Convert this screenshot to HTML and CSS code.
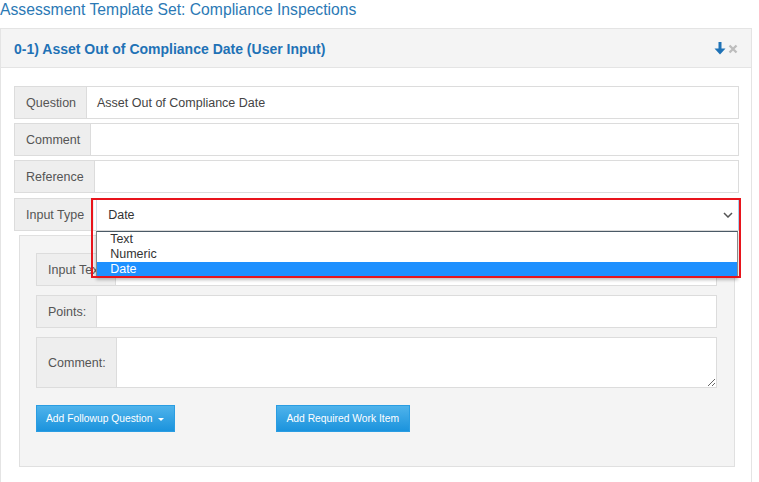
FILE: index.html
```html
<!DOCTYPE html>
<html>
<head>
<meta charset="utf-8">
<link rel="stylesheet" href="styles.css">
</head>
<body>
<div class="title">Assessment Template Set: Compliance Inspections</div>
<div class="panel">
  <div class="panel-head">
    <span class="head-text">0-1) Asset Out of Compliance Date (User Input)</span>
    <span class="head-icons">
      <svg width="12" height="13" viewBox="0 0 12 13"><path d="M4.5 0h3v6.5h4L6 12.5 0.5 6.5h4z" fill="#1f72b6"/></svg>
      <svg width="10" height="10" viewBox="0 0 10 10"><path d="M1.5 1.5l7 7M8.5 1.5l-7 7" stroke="#bdbdbd" stroke-width="2.4"/></svg>
    </span>
  </div>
  <div class="panel-body">
    <div class="row"><div class="label">Question</div><div class="field">Asset Out of Compliance Date</div></div>
    <div class="row"><div class="label">Comment</div><div class="field"></div></div>
    <div class="row"><div class="label">Reference</div><div class="field"></div></div>
    <div class="row type-row">
      <div class="label">Input Type</div>
      <div class="select">
        <span>Date</span>
        <svg class="chev" width="10" height="6" viewBox="0 0 10 6"><path d="M1 1l4 4 4-4" fill="none" stroke="#555" stroke-width="1.5"/></svg>
        <div class="dropdown">
          <div class="opt">Text</div>
          <div class="opt">Numeric</div>
          <div class="opt sel">Date</div>
        </div>
      </div>
      <div class="redbox"></div>
    </div>
    <div class="well">
      <div class="row"><div class="label">Input Text:</div><div class="field"></div></div>
      <div class="row"><div class="label">Points:</div><div class="field"></div></div>
      <div class="row tall"><div class="label">Comment:</div><textarea class="field ta"></textarea></div>
      <div class="buttons">
        <div class="btn">Add Followup Question <span class="caret"></span></div>
        <div class="btn second">Add Required Work Item</div>
      </div>
    </div>
  </div>
</div>
</body>
</html>
```
FILE: styles.css
```css
html, body { margin: 0; padding: 0; background: #fff; }
body { font-family: "Liberation Sans", Arial, sans-serif; color: #555; }
.title { font-size: 15.7px; line-height: 20px; color: #2b79b5; height: 28px; padding-left: 0; }
.panel { width: 752px; box-sizing: border-box; border: 1px solid #e4e4e4; border-bottom: none; height: 454px; }
.panel-head { height: 38px; background: #f4f4f4; border-bottom: 1px solid #e4e4e4; display: flex; align-items: center; justify-content: space-between; padding: 0 13px 0 13px; }
.head-text { font-size: 14px; font-weight: bold; color: #1f72b6; margin-top: 1px; }
.head-icons { display: flex; align-items: center; gap: 2px; margin-top: 1px; }
.panel-body { padding: 18px 12px 0 13px; }
.row { display: flex; height: 33px; box-sizing: border-box; border: 1px solid #dcdcdc; margin-bottom: 4px; font-size: 12.5px; }
.label { background: #eeeeee; border-right: 1px solid #dcdcdc; display: flex; align-items: center; padding: 0 10px 0 11px; color: #555; white-space: nowrap; }
.field { flex: 1; background: #fff; display: flex; align-items: center; padding-left: 10px; color: #444; }
.type-row { position: relative; border-right: none; margin-top: 5px; }
.type-row .label { border-right: none; }
.select { flex: 1; position: relative; background: #fff; border-left: 1px solid #cfdde8; border-right: 1px solid #a9d1ec; display: flex; align-items: center; padding-left: 11px; color: #333; margin-left: 2px; }
.chev { position: absolute; right: 5px; top: 13px; }
.dropdown { position: absolute; left: -1px; right: 0; top: 32px; background: #fff; border: 1px solid #8a8a8a; border-top: 1px solid #4a5a66; box-shadow: 0 2px 3px rgba(0,0,0,0.25); z-index: 3; }
.opt { height: 15px; line-height: 15px; padding-left: 13px; font-size: 12.5px; color: #333; }
.opt.sel { background: #1e90ff; color: #fff; }
.redbox { position: absolute; left: 76px; top: -1px; width: 646px; height: 76px; border: 2px solid #e8141c; z-index: 4; pointer-events: none; }
.well { margin: 1px 4px 0 5px; background: #f4f4f4; border: 1px solid #e0e0e0; padding: 17px 17px 34px 16px; }
.well .row { margin-bottom: 9px; }
.well .row.tall { height: 51px; margin-bottom: 17px; }
.ta { resize: vertical; border: none; margin: 0; font: inherit; outline: none; }
.buttons { display: flex; }
.btn { height: 27px; box-sizing: border-box; padding: 0 10px 0 9px; display: flex; align-items: center; font-size: 10.3px; color: #fff; background: linear-gradient(#4fb3eb, #1b93dd); border: 1px solid #2a9de2; }
.btn.second { margin-left: 101px; }
.caret { display: inline-block; width: 0; height: 0; border-left: 3.5px solid transparent; border-right: 3.5px solid transparent; border-top: 3.5px solid #fff; margin-left: 6px; margin-top: 1px; }
```
